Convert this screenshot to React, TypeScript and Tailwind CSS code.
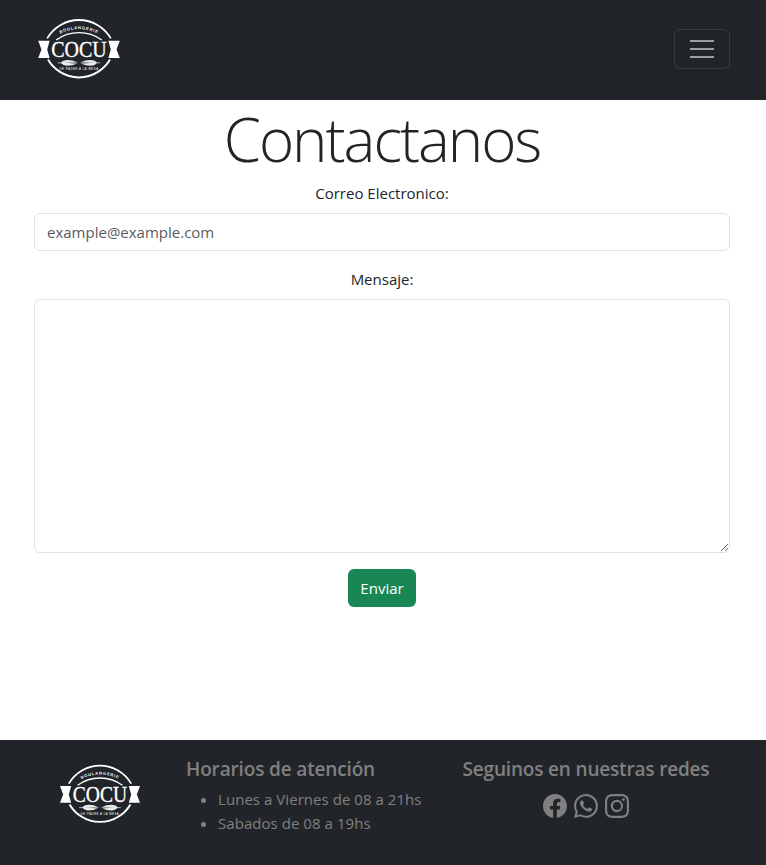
import { BsFacebook, BsWhatsapp, BsInstagram } from "react-icons/bs";

function Wheat({ flip }: { flip?: boolean }) {
  return (
    <g transform={flip ? "translate(100 0) scale(-1 1)" : undefined}>
      <path d="M24 55 L48 55" stroke="#fff" strokeWidth="0.8" />
      <path d="M28 55 Q30 51.5 36 51.5 Q42 51.5 47 54 Q36 55 28 55Z M28 55 Q30 58.5 36 58.5 Q42 58.5 47 56 Q36 55 28 55Z" fill="#fff" fillOpacity="0.9" />
    </g>
  );
}

function Logo({ className, id }: { className: string; id: string }) {
  return (
    <svg viewBox="0 0 100 76" className={className} aria-label="Cocu">
      <path d="M11 25 A45 45 0 0 1 89 25" fill="none" stroke="#fff" strokeWidth="2.2" />
      <path d="M22 27 A48 48 0 0 1 78 27" fill="none" stroke="#fff" strokeWidth="1.6" />
      <path d="M12 51 A44 44 0 0 0 88 51" fill="none" stroke="#fff" strokeWidth="2.4" />
      <path d="M0 28 H14 L11 38.5 L14 49 H0 L4 38.5Z M100 28 H86 L89 38.5 L86 49 H100 L96 38.5Z" fill="#fff" />
      <path id={id} d="M16 27 A50 50 0 0 1 84 27" fill="none" />
      <text fill="#fff" fontSize="5" fontWeight="700" fontFamily="'Liberation Sans',sans-serif" letterSpacing="1">
        <textPath href={`#${id}`} startOffset="50%" textAnchor="middle">BOULANGERIE</textPath>
      </text>
      <text x="50" y="48" textAnchor="middle" fill="#fff" fontSize="29" fontFamily="'Liberation Serif',serif" stroke="#fff" strokeWidth="0.4" textLength="68" lengthAdjust="spacingAndGlyphs">COCU</text>
      <Wheat />
      <Wheat flip />
      <text x="50" y="64" textAnchor="middle" fill="#fff" fontSize="3.4" letterSpacing="0.7" fontFamily="'Liberation Sans',sans-serif">DE PADRE A LA MESA</text>
    </svg>
  );
}

export default function App() {
  return (
    <div className="min-h-[865px] flex flex-col bg-white text-[#212529] font-['Open_Sans','Noto_Sans',sans-serif] text-[15px] leading-6">
      <nav className="h-[100px] bg-[#212529] flex items-center justify-between pl-[38px] pr-[36px]">
        <Logo id="logo-top" className="w-[82px] h-[62px] mb-[2px]" />
        <button className="w-[56px] h-[40px] rounded-md border border-white/10 flex flex-col items-center justify-center gap-[6px] mb-[2px]">
          <span className="block w-[24px] h-[2px] bg-white/55" />
          <span className="block w-[24px] h-[2px] bg-white/55" />
          <span className="block w-[24px] h-[2px] bg-white/55" />
        </button>
      </nav>

      <main className="flex-1 pl-[34px] pr-[36px] flex flex-col items-stretch">
        <h1 className="text-center text-[60px] leading-[77px] font-light mt-[1px] font-['Open_Sans',sans-serif] tracking-[-2px]">Contactanos</h1>
        <label className="text-center mt-[3px]">Correo Electronico:</label>
        <input
          placeholder="example@example.com"
          className="mt-[8px] h-[38px] w-full rounded-md border border-[#dee2e6] px-3 text-[15px] placeholder:text-[#595c5f] outline-none"
        />
        <label className="text-center mt-[16px]">Mensaje:</label>
        <textarea className="mt-[8px] h-[254px] w-full rounded-md border border-[#dee2e6] outline-none block" />
        <div className="flex justify-center mt-[16px]">
          <button className="w-[68px] h-[38px] rounded-md bg-[#198754] text-white">Enviar</button>
        </div>
      </main>

      <footer className="h-[125px] bg-[#212529] flex text-[#808080]">
        <div className="w-[186px] shrink-0 pl-[60px] pt-[23px]">
          <Logo id="logo-bottom" className="w-[80px] h-[62px]" />
        </div>
        <div className="w-[252px] shrink-0 pt-[17px]">
          <h5 className="text-[19px] leading-6 font-semibold tracking-[-0.15px]">Horarios de atención</h5>
          <ul className="list-disc pl-[32px] mt-[6px] text-[15px] leading-6 tracking-[0.05px]">
            <li>Lunes a Viernes de 08 a 21hs</li>
            <li>Sabados de 08 a 19hs</li>
          </ul>
        </div>
        <div className="w-[270px] shrink-0 ml-[13px] pt-[17px] flex flex-col items-center">
          <h5 className="text-[19px] leading-6 font-semibold tracking-[-0.18px] whitespace-nowrap">Seguinos en nuestras redes</h5>
          <div className="flex gap-[7px] mt-[13px]">
            <BsFacebook size={24} />
            <BsWhatsapp size={24} />
            <BsInstagram size={24} />
          </div>
        </div>
      </footer>
    </div>
  );
}
